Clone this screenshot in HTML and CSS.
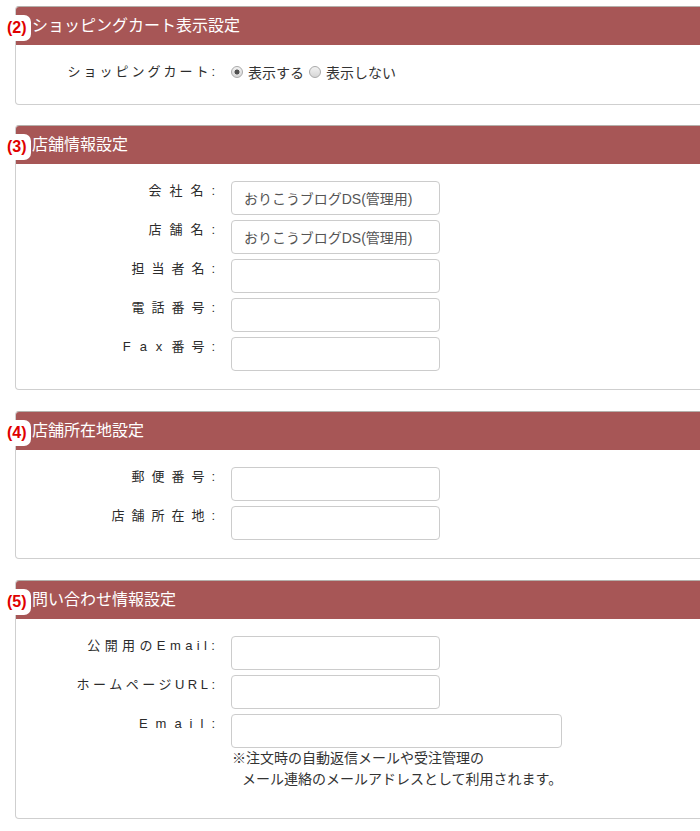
FILE: index.html
```html
<!DOCTYPE html>
<html lang="ja">
<head>
<meta charset="utf-8">
<title>設定</title>
<link rel="stylesheet" href="styles.css">
</head>
<body>
<div class="panel">
  <div class="panel-head"><span class="num">(2)</span>ショッピングカート表示設定</div>
  <div class="panel-body body-cart">
    <div class="row row-radio">
      <label class="lbl ls3">ショッピングカート:</label>
      <div class="radios">
        <label class="radio"><input type="radio" name="cart" checked>表示する</label>
        <label class="radio"><input type="radio" name="cart">表示しない</label>
      </div>
    </div>
  </div>
</div>

<div class="panel">
  <div class="panel-head"><span class="num">(3)</span>店舗情報設定</div>
  <div class="panel-body">
    <div class="row"><label class="lbl ls8">会社名:</label><input class="ctl" type="text" value="おりこうブログDS(管理用)"></div>
    <div class="row"><label class="lbl ls8">店舗名:</label><input class="ctl" type="text" value="おりこうブログDS(管理用)"></div>
    <div class="row"><label class="lbl ls7">担当者名:</label><input class="ctl" type="text"></div>
    <div class="row"><label class="lbl ls7">電話番号:</label><input class="ctl" type="text"></div>
    <div class="row"><label class="lbl ls7"><span class="fax">Fax</span>番号:</label><input class="ctl" type="text"></div>
  </div>
</div>

<div class="panel">
  <div class="panel-head"><span class="num">(4)</span>店舗所在地設定</div>
  <div class="panel-body">
    <div class="row"><label class="lbl ls7">郵便番号:</label><input class="ctl" type="text"></div>
    <div class="row"><label class="lbl ls7">店舗所在地:</label><input class="ctl" type="text"></div>
  </div>
</div>

<div class="panel">
  <div class="panel-head"><span class="num">(5)</span>問い合わせ情報設定</div>
  <div class="panel-body body-contact">
    <div class="row"><label class="lbl ls4">公開用のEmail:</label><input class="ctl" type="text"></div>
    <div class="row"><label class="lbl ls35">ホームページURL:</label><input class="ctl" type="text"></div>
    <div class="row row-mail">
      <label class="lbl ls8">Email:</label>
      <div class="mail-field">
        <input class="ctl ctl-wide" type="text">
        <p class="note">※注文時の自動返信メールや受注管理の<br>メール連絡のメールアドレスとして利用されます。</p>
      </div>
    </div>
  </div>
</div>
</body>
</html>
```

FILE: styles.css
```css
html {
  overflow: hidden;
}

body {
  margin: 0;
  padding: 6px 0 0 15px;
  background: #fff;
  font-family: "Liberation Sans", "Noto Sans CJK JP", sans-serif;
  color: #333;
}

.panel {
  position: relative;
  margin: 0 -30px 21px 0;
  border: 1px solid #cfcfcf;
  border-top-color: #b5b0ab;
  border-radius: 4px 0 0 4px;
  background: #fff;
}

.panel:first-child {
  margin-bottom: 20px;
}

.panel-head {
  height: 38px;
  padding-left: 16px;
  background: #a75656;
  color: #fff;
  font-size: 16px;
  line-height: 38px;
  border-radius: 3px 0 0 0;
}

.num {
  position: absolute;
  left: -12px;
  top: 8px;
  width: 27px;
  height: 26px;
  border-radius: 7px;
  background: #fff;
  color: #e00000;
  font-family: "Liberation Sans", sans-serif;
  font-weight: bold;
  font-size: 16px;
  line-height: 26px;
  text-indent: 3px;
}

.panel-body {
  padding: 17px 0 18px;
  display: flex;
  flex-direction: column;
  gap: 5px;
}

.body-cart {
  padding: 12px 0 17px;
}

.body-contact {
  padding-bottom: 28px;
}

.row {
  display: grid;
  grid-template-columns: 199px 1fr;
  column-gap: 16px;
  align-items: start;
}

.row-radio {
  align-items: center;
  height: 30px;
}

.lbl {
  display: block;
  text-align: right;
  font-size: 13px;
  line-height: 20px;
  color: #2b2b2b;
  white-space: nowrap;
}

.ls3 { letter-spacing: 3px; margin-right: -3px; }
.ls35 { letter-spacing: 3.5px; margin-right: -3.5px; }
.ls4 { letter-spacing: 4.4px; margin-right: -4.4px; }
.ls7 { letter-spacing: 7px; margin-right: -7px; }
.ls8 { letter-spacing: 8px; margin-right: -8px; }

.fax {
  letter-spacing: 9px;
}

.radios {
  display: flex;
  align-items: center;
  gap: 5px;
  font-size: 14px;
  color: #333;
}

.radio {
  display: flex;
  align-items: center;
  gap: 5px;
}

.radio input {
  appearance: none;
  -webkit-appearance: none;
  margin: 0;
  width: 12px;
  height: 12px;
  border: 1px solid #a9a9a9;
  border-radius: 50%;
  background: linear-gradient(#f2f2f2, #d6d6d6);
}

.radio input:checked {
  background: radial-gradient(circle, #505050 0, #505050 2.2px, transparent 2.8px), linear-gradient(#f2f2f2, #d6d6d6);
}

.ctl {
  box-sizing: border-box;
  width: 209px;
  height: 34px;
  margin: 0;
  padding: 6px 12px;
  border: 1px solid #ccc;
  border-radius: 4px;
  background: #fff;
  font-family: "Liberation Sans", "Noto Sans CJK JP", sans-serif;
  font-size: 14px;
  color: #555;
  outline: none;
}

.ctl-wide {
  width: 331px;
}

.mail-field {
  display: flex;
  flex-direction: column;
  align-items: flex-start;
}

.note {
  margin: 0;
  padding-left: 11px;
  text-indent: -10px;
  font-size: 14px;
  line-height: 21px;
  color: #333;
}
```
